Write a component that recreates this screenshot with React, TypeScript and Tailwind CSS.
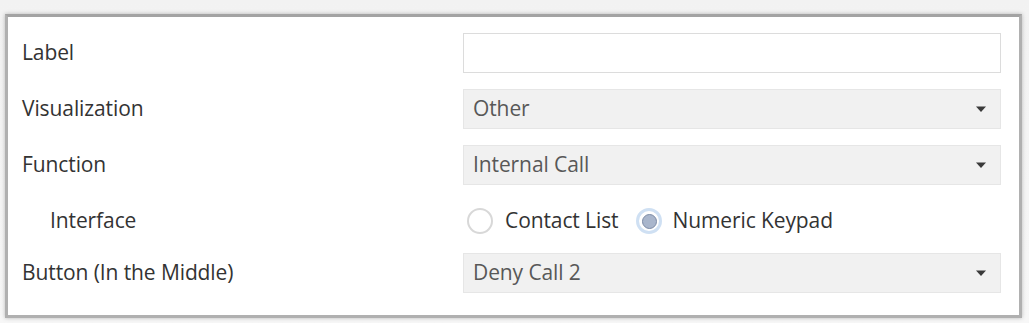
const font = { fontFamily: '"Open Sans", "Noto Sans", Arial, sans-serif' };

function Caret() {
  return (
    <svg width="12" height="8" viewBox="0 0 12 8" className="shrink-0">
      <path d="M1 1.5h10L6 7z" fill="#3a3a3a" />
    </svg>
  );
}

function Select({ value }: { value: string }) {
  return (
    <div className="flex items-center justify-between h-[40px] pl-[9px] pr-[13px] bg-[#f1f1f1] border border-[#e6e6e6] text-[#585858]">
      <span>{value}</span>
      <Caret />
    </div>
  );
}

function Row({ label, indent, children }: { label: string; indent?: boolean; children: React.ReactNode }) {
  return (
    <div className="flex items-center h-[40px]">
      <div className={`w-[455px] shrink-0 text-[#333] ${indent ? 'pl-[42px]' : 'pl-[14px]'}`}>{label}</div>
      <div className="flex-1">{children}</div>
    </div>
  );
}

export default function App() {
  return (
    <div className="w-[1029px] h-[323px] bg-gradient-to-b from-[#f2f2f2] to-[#f7f7f7] pt-[14px] pl-[5px]" style={font}>
      <div className="w-[1017px] h-[304px] bg-white border-[3px] border-[#b0b0b0] border-t-[#a3a3a3] shadow-[0_0_4px_rgba(0,0,0,0.25)] pr-[18px] pt-[16px] text-[21px] tracking-[-0.1px] flex flex-col gap-[16px]">
        <Row label="Label">
          <div className="h-[40px] bg-white border border-[#dcdcdc]" />
        </Row>
        <Row label="Visualization">
          <Select value="Other" />
        </Row>
        <Row label="Function">
          <Select value="Internal Call" />
        </Row>
        <Row label="Interface" indent>
          <div className="flex items-center text-[#333] pl-[4px]">
            <span className="w-[26px] h-[26px] rounded-full border-2 border-[#d8d8d8] bg-white" />
            <span className="ml-[12px] mr-[18px]">Contact List</span>
            <span className="w-[26px] h-[26px] rounded-full border-[3px] border-[#cfe0f3] bg-white flex items-center justify-center">
              <span className="w-[15px] h-[15px] rounded-full bg-[#a9b6cc] border border-[#7c8ba6]" />
            </span>
            <span className="ml-[10px]">Numeric Keypad</span>
          </div>
        </Row>
        <div className="-mt-[4px]">
          <Row label="Button (In the Middle)">
            <Select value="Deny Call 2" />
          </Row>
        </div>
      </div>
    </div>
  );
}
